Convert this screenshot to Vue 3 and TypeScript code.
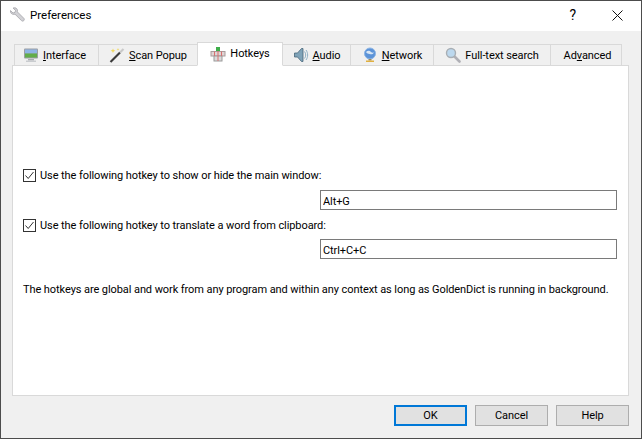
<script setup lang="ts">
interface Tab {
  id: string
  before: string
  key: string
  after: string
  width: number
}

const tabs: Tab[] = [
  { id: "interface", before: "", key: "I", after: "nterface", width: 85 },
  { id: "scan", before: "", key: "S", after: "can Popup", width: 99 },
  { id: "hotkeys", before: "Hotkeys", key: "", after: "", width: 86 },
  { id: "audio", before: "", key: "A", after: "udio", width: 68 },
  { id: "network", before: "", key: "N", after: "etwork", width: 83 },
  { id: "search", before: "Full-text search", key: "", after: "", width: 117 },
  { id: "advanced", before: "Ad", key: "v", after: "anced", width: 71 },
]

const activeTab = "hotkeys"
</script>

<template>
  <div class="window">
    <!-- title bar -->
    <div class="titlebar">
      <svg class="app-icon" width="16" height="16" viewBox="0 0 16 16">
        <path d="M1.500 3.500 4 6l2-.6L6.500 3.400 4 1 6 .8c1.500.2 2.600 1.500 2.500 3l-.2 1 6.500 6.500c.7.800.6 1.700 0 2.300-.7.700-1.600.7-2.300 0L6 7.200l-1.200.2C2.800 7.500 1 5.800 1.500 3.500z" fill="#d2d2d6" stroke="#a4a4aa" stroke-width=".8" />
      </svg>
      <span class="title">Preferences</span>
      <span class="help-mark">?</span>
      <svg class="close" width="11" height="11" viewBox="0 0 11 11">
        <path d="M.5.500l10 10M10.500.500l-10 10" stroke="#111" stroke-width="1" />
      </svg>
    </div>

    <div class="body">
      <div class="tabs">
        <div
          v-for="tab in tabs"
          :key="tab.id"
          class="tab"
          :class="{ active: tab.id === activeTab }"
          :style="{ width: tab.width + 'px' }"
        >
          <svg v-if="tab.id === 'interface'" width="16" height="16" viewBox="0 0 16 16">
            <rect x="1" y="1.500" width="14" height="10" rx="1" fill="#9a9ea3" />
            <rect x="2" y="2.500" width="12" height="4" fill="#8fb4e6" />
            <rect x="2" y="6.500" width="12" height="4" fill="#62ad4a" />
            <rect x="5" y="12" width="6" height="1.500" fill="#a8acb0" />
            <rect x="3" y="13.500" width="10" height="1.500" fill="#c9cccf" />
          </svg>
          <svg v-else-if="tab.id === 'scan'" width="16" height="16" viewBox="0 0 16 16">
            <path d="M1.500 15 11 5.500" stroke="#3a3a3a" stroke-width="2.200" />
            <path d="M11 5.500 14.500 2" stroke="#c9c9c9" stroke-width="2.200" />
            <path d="M4 1.500l.7 1.600 1.600.7-1.600.7L4 6.100l-.7-1.600-1.600-.7 1.600-.7zM9 1l.4 1 1 .4-1 .4-.4 1-.4-1-1-.4 1-.4z" fill="#f0d860" />
          </svg>
          <svg v-else-if="tab.id === 'hotkeys'" width="16" height="16" viewBox="0 0 16 16">
            <rect x="1" y="5.500" width="14" height="4.500" fill="#e0d4d4" stroke="#a89c9c" />
            <rect x="4" y="10" width="8" height="5" fill="#dcdcdc" stroke="#9a9a9a" />
            <path d="M8 4v11M4.500 5.500v4.500M11.500 5.500v4.500" stroke="#d87070" />
            <rect x="6" y="1" width="4" height="4" fill="#3fae4a" />
          </svg>
          <svg v-else-if="tab.id === 'audio'" width="16" height="16" viewBox="0 0 16 16">
            <path d="M1.500 6h3l4-4.500h1.500v13H8.500l-4-4.500h-3z" fill="#7fa3b8" stroke="#47667a" stroke-width=".8" />
            <path d="M11.500 4.500c1.600 2 1.600 5 0 7M13 3c2.200 3 2.200 7 0 10" fill="none" stroke="#8fb0c4" />
          </svg>
          <svg v-else-if="tab.id === 'network'" width="16" height="16" viewBox="0 0 16 16">
            <circle cx="8" cy="6.500" r="5.500" fill="#5c93d8" stroke="#8cb4e4" />
            <path d="M4 5c2-2 4-1 5 0s3 .5 3 .5c-1 2-3 2-4.500 1.500S5 7 4 5z" fill="#d8e6f4" />
            <rect x="6.500" y="12" width="3" height="1.500" fill="#9a8a60" />
            <rect x="4" y="13.500" width="8" height="1.500" fill="#e0b040" />
          </svg>
          <svg v-else-if="tab.id === 'search'" width="16" height="16" viewBox="0 0 16 16">
            <path d="M9.500 9.500l5 5" stroke="#b0b0b6" stroke-width="2.600" stroke-linecap="round" />
            <circle cx="6" cy="6" r="4.500" fill="#bcd8ee" stroke="#a8aeb4" stroke-width="1.400" />
          </svg>
          <span class="tab-label">{{ tab.before }}<u v-if="tab.key">{{ tab.key }}</u>{{ tab.after }}</span>
        </div>
      </div>

      <!-- hotkeys page -->
      <div class="pane">
        <div class="check-row">
          <span class="check">
            <svg width="11" height="11" viewBox="0 0 11 11">
              <path d="M1.500 5.500 4.200 8.500 9.500 2" fill="none" stroke="#333" stroke-width="1" />
            </svg>
          </span>
          <span>Use the following hotkey to show or hide the main window:</span>
        </div>
        <div class="key-row"><input class="key-input" value="Alt+G" /></div>
        <div class="check-row second">
          <span class="check">
            <svg width="11" height="11" viewBox="0 0 11 11">
              <path d="M1.500 5.500 4.200 8.500 9.500 2" fill="none" stroke="#333" stroke-width="1" />
            </svg>
          </span>
          <span>Use the following hotkey to translate a word from clipboard:</span>
        </div>
        <div class="key-row"><input class="key-input" value="Ctrl+C+C" /></div>
        <p class="note">The hotkeys are global and work from any program and within any context as long as GoldenDict is running in background.</p>
      </div>

      <div class="buttons">
        <button class="primary">OK</button>
        <button>Cancel</button>
        <button>Help</button>
      </div>
    </div>
  </div>
</template>

<style scoped>
.window {
  width: 640px;
  height: 437px;
  border: 1px solid #4c4c4c;
  display: flex;
  flex-direction: column;
  font-family: Roboto, "Liberation Sans", sans-serif;
  font-size: 11px;
  letter-spacing: -0.08px;
  color: #000;
  background: #f0f0f0;
}

.titlebar {
  height: 30px;
  flex: none;
  box-sizing: border-box;
  display: flex;
  align-items: center;
  background: #fff;
  padding: 0 0 2px 8px;
}

.app-icon {
  margin-right: 5px;
}

.title {
  flex: 1;
  font-size: 11.5px;
  letter-spacing: 0;
}

.help-mark {
  font-size: 14px;
  margin-right: 36px;
}

.close {
  margin-right: 18px;
}

.body {
  flex: 1;
  display: flex;
  flex-direction: column;
  padding: 11px 12px 0 11px;
}

.tabs {
  height: 24px;
  flex: none;
  display: flex;
  align-items: flex-end;
  padding-left: 2px;
  position: relative;
  z-index: 1;
}

.tab {
  height: 22px;
  box-sizing: border-box;
  border: 1px solid #d9d9d9;
  border-left-width: 0;
  display: flex;
  align-items: center;
  justify-content: center;
  gap: 4px;
  white-space: nowrap;
}

.tab:first-child {
  border-left-width: 1px;
  padding-right: 4px;
}

.tab:last-child {
  padding-left: 3px;
}

.tab.active {
  height: 24px;
  padding-bottom: 1px;
  background: #fff;
  border-bottom-color: #fff;
  border-left-width: 1px;
  margin-left: -1px;
}

.pane {
  height: 331px;
  flex: none;
  box-sizing: border-box;
  margin-top: -1px;
  background: #fff;
  border: 1px solid #d9d9d9;
  padding: 99px 10px 0 10px;
}

.check-row {
  height: 20px;
  display: flex;
  align-items: center;
  gap: 4px;
}

.check-row.second {
  margin-top: 5px;
}

.check {
  width: 13px;
  height: 13px;
  box-sizing: border-box;
  border: 1px solid #333;
  background: #fff;
  display: flex;
}

.key-row {
  display: flex;
  justify-content: flex-end;
  margin-top: 5px;
  margin-right: 1px;
}

.second + .key-row {
  margin-top: 4px;
}

.key-input {
  width: 297px;
  height: 20px;
  box-sizing: border-box;
  border: 1px solid #7a7a7a;
  border-radius: 0;
  padding: 2px 2px 0;
  font: inherit;
  letter-spacing: inherit;
  color: #000;
  outline: none;
}

.note {
  margin: 22px 0 0;
  line-height: 18px;
  white-space: nowrap;
}

.buttons {
  display: flex;
  justify-content: flex-end;
  gap: 8px;
  margin-top: 9px;
}

.buttons button {
  width: 73px;
  height: 21px;
  box-sizing: border-box;
  border: 1px solid #adadad;
  border-radius: 0;
  background: #e1e1e1;
  font: inherit;
  letter-spacing: inherit;
  color: #000;
  padding: 0;
}

.buttons button.primary {
  border: 2px solid #0078d7;
}
</style>
